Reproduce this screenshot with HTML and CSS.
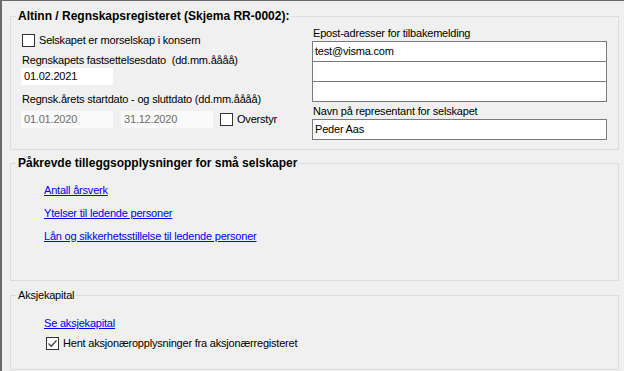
FILE: index.html
```html
<!DOCTYPE html>
<html>
    <head>
        <meta charset="UTF-8">
        <title>Altinn / Regnskapsregisteret</title>
        <link rel="stylesheet" href="styles.css">
    </head>
    <body>
        <div id="panel">
            <fieldset class="group group-altinn">
                <legend class="bold">Altinn / Regnskapsregisteret (Skjema RR-0002):</legend>
                <div class="cols">
                    <div class="col-left">
                        <label class="check first">
                            <span class="box"></span>
                            <span>Selskapet er morselskap i konsern</span>
                        </label>
                        <div class="lbl lbl-fast">Regnskapets fastsettelsesdato&nbsp; (dd.mm.åååå)</div>
                        <div class="field">01.02.2021</div>
                        <div class="lbl lbl-periode">Regnsk.årets startdato - og sluttdato (dd.mm.åååå)</div>
                        <div class="row-dates">
                            <div class="field disabled">01.01.2020</div>
                            <div class="field disabled">31.12.2020</div>
                            <label class="check">
                                <span class="box"></span>
                                <span>Overstyr</span>
                            </label>
                        </div>
                    </div>
                    <div class="col-right">
                        <div class="lbl lbl-epost">Epost-adresser for tilbakemelding</div>
                        <div class="list">
                            <div class="list-row">test@visma.com</div>
                            <div class="list-row"></div>
                            <div class="list-row"></div>
                        </div>
                        <div class="lbl lbl-navn">Navn på representant for selskapet</div>
                        <div class="text-box">Peder Aas</div>
                    </div>
                </div>
            </fieldset>

            <fieldset class="group group-tillegg">
                <legend class="bold">Påkrevde tilleggsopplysninger for små selskaper</legend>
                <ul class="links">
                    <li><a href="#">Antall årsverk</a></li>
                    <li><a href="#">Ytelser til ledende personer</a></li>
                    <li><a href="#">Lån og sikkerhetsstillelse til ledende personer</a></li>
                </ul>
            </fieldset>

            <fieldset class="group group-aksje">
                <legend>Aksjekapital</legend>
                <div class="aksje">
                    <a href="#">Se aksjekapital</a>
                    <label class="check checked">
                        <span class="box">
                            <svg width="11" height="11" viewBox="0 0 11 11">
                                <path d="M1.5 5.5 L4.2 8.2 L9.5 2.5" fill="none" stroke="#444" stroke-width="1.3"/>
                            </svg>
                        </span>
                        <span>Hent aksjonæropplysninger fra aksjonærregisteret</span>
                    </label>
                </div>
            </fieldset>
        </div>
    </body>
</html>
```

FILE: styles.css
```css
* {
    padding: 0;
    margin: 0;
    box-sizing: border-box;
}

ul,
li {
    list-style: none;
}

body {
    font-family: "Liberation Sans", Arial, sans-serif;
    font-size: 11px;
    letter-spacing: -0.2px;
    color: #000;
    background-color: #f0f0f0;
}

#panel {
    width: 624px;
    height: 371px;
    border-top: 1px solid #6a6a6a;
    border-left: 2px solid #6a6a6a;
    background-color: #f0f0f0;
    padding-left: 8px;
    overflow: hidden;
}

/* group boxes */
.group {
    width: 609px;
    border: 1px solid #dcdcdc;
    padding: 0;
}

.group legend {
    margin-left: 5px;
    padding: 0 2px;
    line-height: 14px;
    font-size: 11px;
}

.group legend.bold {
    font-weight: bold;
    font-size: 12px;
    letter-spacing: 0;
}

.group-altinn {
    margin-top: 8px;
    height: 141px;
}

.group-tillegg {
    margin-top: 6px;
    height: 125px;
}

.group-aksje {
    margin-top: 7px;
    height: 82px;
}

/* first group */
.cols {
    display: grid;
    grid-template-columns: 291px 295px;
    padding-left: 10px;
}

.col-left,
.col-right {
    display: flex;
    flex-direction: column;
}

.lbl {
    line-height: 13px;
    white-space: nowrap;
}

.check {
    display: flex;
    align-items: center;
    gap: 4px;
    line-height: 13px;
    white-space: nowrap;
}

.check .box {
    width: 13px;
    height: 13px;
    border: 1px solid #333;
    background-color: #fff;
    display: flex;
    align-items: center;
    justify-content: center;
    flex: none;
}

.check.first {
    margin-top: 11px;
    margin-left: 1px;
}

.lbl-fast {
    margin-top: 7px;
    margin-left: 1px;
}

.field {
    width: 92px;
    height: 17px;
    line-height: 17px;
    padding-left: 3px;
    background-color: #fff;
    margin-top: 1px;
}

.field.disabled {
    background-color: #fafafa;
    color: #6d6d6d;
    margin-top: 0;
}

.lbl-periode {
    margin-top: 8px;
    margin-left: 1px;
}

.row-dates {
    display: flex;
    align-items: center;
    gap: 7px;
    margin-top: 5px;
}

.row-dates .field + .field {
    margin-left: 1px;
}

.lbl-epost {
    margin-top: 4px;
    margin-left: 1px;
}

.list {
    margin-top: 1px;
    border: 1px solid #7a7a7a;
    background-color: #fff;
}

.list-row {
    height: 20px;
    line-height: 19px;
    padding-left: 2px;
    border-bottom: 1px solid #7a7a7a;
}

.list-row:last-child {
    height: 19px;
    border-bottom: none;
}

.lbl-navn {
    margin-top: 3px;
    margin-left: 1px;
}

.text-box {
    margin-top: 1px;
    height: 21px;
    line-height: 19px;
    padding-left: 2px;
    border: 1px solid #7a7a7a;
    background-color: #fff;
}

/* links */
a {
    color: #0000ff;
    text-decoration: underline;
}

.links {
    display: flex;
    flex-direction: column;
    gap: 10px;
    padding-left: 33px;
    padding-top: 14px;
    line-height: 13px;
}

.aksje {
    display: flex;
    flex-direction: column;
    align-items: flex-start;
    gap: 7px;
    padding-left: 33px;
    padding-top: 15px;
    line-height: 13px;
}

.aksje .check {
    margin-left: 2px;
}
```
